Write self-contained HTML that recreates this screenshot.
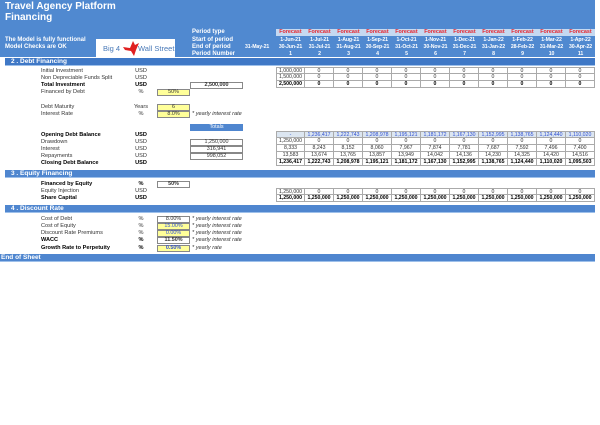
<!DOCTYPE html>
<html><head><meta charset="utf-8"><style>
*{margin:0;padding:0;box-sizing:border-box}
body{width:600px;height:425px;background:#fff;font-family:"Liberation Sans",sans-serif;font-size:5.6px;color:#333;position:relative;overflow:hidden}
.a{position:absolute;white-space:nowrap;line-height:7px}
.hdr{position:absolute;left:0;top:0;width:595px;height:57px;background:#5089d0}
.t{color:#fff;font-weight:bold;font-size:10px;line-height:11px}
.w{color:#fff;font-weight:bold;font-size:6px}
.d{color:#fff;font-weight:bold;font-size:5.2px;letter-spacing:-0.1px}
.d span{width:29px;text-align:center;display:inline-block}
.bar{position:absolute;left:5px;width:590px;height:8px;background:#4f86cf;border-bottom:1px solid #9ec0ea;color:#fff;font-weight:bold;font-size:6.5px;line-height:7px;padding-left:6px}
.row{position:absolute;left:276px;display:flex;height:7px}
.row div{width:29px;text-align:center;line-height:6px;font-size:5.2px;border:1px solid #aaa;border-left:none;border-top:none}
.row div:first-child{border-left:1px solid #aaa}
.top div{border-top:1px solid #aaa}
.b div{font-weight:bold;color:#000}
.blue div{background:#dce6f1;color:#3050d0}
.fc div{border:none!important;color:#e8242c;font-weight:bold;font-size:5.4px;line-height:7px}
.lab{left:41px}.unit{left:132px;width:18px;text-align:center}
.box{position:absolute;height:7px;border:1px solid #888;text-align:center;line-height:5px;font-size:5.4px}
.y{background:#ffff99}
.note{left:192px;font-style:italic}
</style></head><body>
<div class="hdr"></div>
<div class="a t" style="left:5px;top:1px">Travel Agency Platform</div>
<div class="a t" style="left:5px;top:12px">Financing</div>
<div class="a w" style="left:5px;top:37px">The Model is fully functional</div>
<div class="a w" style="left:5px;top:44px">Model Checks are OK</div>
<div style="position:absolute;left:96px;top:39px;width:79px;height:18px;background:#fff"></div>
<div class="a" style="left:103px;top:44px;font-size:7.5px;line-height:9px;color:#4a7ab8">Big 4</div>
<div class="a" style="left:138px;top:44px;font-size:7.5px;line-height:9px;color:#4a7ab8">Wall Street</div>
<svg style="position:absolute;left:121px;top:39px" width="20" height="18"><path d="M2 8 L9 9 L12 2 L14 6 L18 4 L15 11 L13 17 L10 12 L4 11Z" fill="#e02020"/></svg>
<div class="a w" style="left:192px;top:29px">Period type</div>
<div class="a w" style="left:192px;top:37px">Start of period</div>
<div class="a w" style="left:192px;top:44px">End of period</div>
<div class="a w" style="left:192px;top:51px">Period Number</div>
<div class="a d" style="left:245px;top:44px">31-May-21</div>
<div style="position:absolute;left:276px;top:29px;width:319px;height:7px;background:#c5d9f1"></div>
<div class="row fc" style="top:29px"><div>Forecast</div><div>Forecast</div><div>Forecast</div><div>Forecast</div><div>Forecast</div><div>Forecast</div><div>Forecast</div><div>Forecast</div><div>Forecast</div><div>Forecast</div><div>Forecast</div></div>
<div class="a d" style="left:276px;top:37px"><span>1-Jun-21</span><span>1-Jul-21</span><span>1-Aug-21</span><span>1-Sep-21</span><span>1-Oct-21</span><span>1-Nov-21</span><span>1-Dec-21</span><span>1-Jan-22</span><span>1-Feb-22</span><span>1-Mar-22</span><span>1-Apr-22</span></div>
<div class="a d" style="left:276px;top:44px"><span>30-Jun-21</span><span>31-Jul-21</span><span>31-Aug-21</span><span>30-Sep-21</span><span>31-Oct-21</span><span>30-Nov-21</span><span>31-Dec-21</span><span>31-Jan-22</span><span>28-Feb-22</span><span>31-Mar-22</span><span>30-Apr-22</span></div>
<div class="a d" style="left:276px;top:51px"><span>1</span><span>2</span><span>3</span><span>4</span><span>5</span><span>6</span><span>7</span><span>8</span><span>9</span><span>10</span><span>11</span></div>

<div class="bar" style="top:58px;background:#3f78c6">2 . Debt Financing</div>

<div class="a lab" style="top:68px">Initial Investment</div><div class="a unit" style="top:68px">USD</div>
<div class="a lab" style="top:75px">Non Depreciable Funds Split</div><div class="a unit" style="top:75px">USD</div>
<div class="a lab" style="top:82px;font-weight:bold;color:#000">Total Investment</div><div class="a unit" style="top:82px;font-weight:bold;color:#000">USD</div>
<div class="box" style="left:190px;top:82px;width:53px;font-weight:bold">2,500,000</div>
<div class="a lab" style="top:89px">Financed by Debt</div><div class="a unit" style="top:89px">%</div>
<div class="box y" style="left:157px;top:89px;width:33px">50%</div>
<div class="row top" style="top:67px"><div>1,000,000</div><div>0</div><div>0</div><div>0</div><div>0</div><div>0</div><div>0</div><div>0</div><div>0</div><div>0</div><div>0</div></div>
<div class="row" style="top:74px"><div>1,500,000</div><div>0</div><div>0</div><div>0</div><div>0</div><div>0</div><div>0</div><div>0</div><div>0</div><div>0</div><div>0</div></div>
<div class="row b" style="top:81px"><div>2,500,000</div><div>0</div><div>0</div><div>0</div><div>0</div><div>0</div><div>0</div><div>0</div><div>0</div><div>0</div><div>0</div></div>

<div class="a lab" style="top:104px">Debt Maturity</div><div class="a unit" style="top:104px">Years</div>
<div class="box y" style="left:157px;top:104px;width:33px">6</div>
<div class="a lab" style="top:111px">Interest Rate</div><div class="a unit" style="top:111px">%</div>
<div class="box y" style="left:157px;top:111px;width:33px">8.0%</div>
<div class="a note" style="top:111px">* yearly interest rate</div>
<div class="box" style="left:190px;top:124px;width:53px;background:#4f86cf;color:#fff;border-color:#4f86cf">Totals</div>

<div class="a lab" style="top:132px;font-weight:bold;color:#000">Opening Debt Balance</div><div class="a unit" style="top:132px;font-weight:bold;color:#000">USD</div>
<div class="a lab" style="top:139px">Drawdown</div><div class="a unit" style="top:139px">USD</div>
<div class="a lab" style="top:146px">Interest</div><div class="a unit" style="top:146px">USD</div>
<div class="a lab" style="top:153px">Repayments</div><div class="a unit" style="top:153px">USD</div>
<div class="a lab" style="top:160px;font-weight:bold;color:#000">Closing Debt Balance</div><div class="a unit" style="top:160px;font-weight:bold;color:#000">USD</div>
<div class="box" style="left:190px;top:139px;width:53px">1,250,000</div>
<div class="box" style="left:190px;top:146px;width:53px">316,941</div>
<div class="box" style="left:190px;top:153px;width:53px">998,052</div>
<div class="row top blue" style="top:131px"><div>-</div><div>1,236,417</div><div>1,222,743</div><div>1,208,978</div><div>1,195,121</div><div>1,181,172</div><div>1,167,130</div><div>1,152,995</div><div>1,138,765</div><div>1,124,440</div><div>1,110,020</div></div>
<div class="row" style="top:138px"><div>1,250,000</div><div>0</div><div>0</div><div>0</div><div>0</div><div>0</div><div>0</div><div>0</div><div>0</div><div>0</div><div>0</div></div>
<div class="row" style="top:145px"><div>8,333</div><div>8,243</div><div>8,152</div><div>8,060</div><div>7,967</div><div>7,874</div><div>7,781</div><div>7,687</div><div>7,592</div><div>7,496</div><div>7,400</div></div>
<div class="row" style="top:152px"><div>13,583</div><div>13,674</div><div>13,765</div><div>13,857</div><div>13,949</div><div>14,042</div><div>14,136</div><div>14,230</div><div>14,325</div><div>14,420</div><div>14,516</div></div>
<div class="row b" style="top:159px"><div>1,236,417</div><div>1,222,743</div><div>1,208,978</div><div>1,195,121</div><div>1,181,172</div><div>1,167,130</div><div>1,152,995</div><div>1,138,765</div><div>1,124,440</div><div>1,110,020</div><div>1,095,503</div></div>

<div class="bar" style="top:170px">3 . Equity Financing</div>
<div class="a lab" style="top:181px;font-weight:bold;color:#000">Financed by Equity</div><div class="a unit" style="top:181px;font-weight:bold;color:#000">%</div>
<div class="box" style="left:157px;top:181px;width:33px;font-weight:bold">50%</div>
<div class="a lab" style="top:188px">Equity Injection</div><div class="a unit" style="top:188px">USD</div>
<div class="a lab" style="top:195px;font-weight:bold;color:#000">Share Capital</div><div class="a unit" style="top:195px;font-weight:bold;color:#000">USD</div>
<div class="row top" style="top:188px"><div>1,250,000</div><div>0</div><div>0</div><div>0</div><div>0</div><div>0</div><div>0</div><div>0</div><div>0</div><div>0</div><div>0</div></div>
<div class="row b" style="top:195px"><div>1,250,000</div><div>1,250,000</div><div>1,250,000</div><div>1,250,000</div><div>1,250,000</div><div>1,250,000</div><div>1,250,000</div><div>1,250,000</div><div>1,250,000</div><div>1,250,000</div><div>1,250,000</div></div>

<div class="bar" style="top:205px">4 . Discount Rate</div>
<div class="a lab" style="top:216px">Cost of Debt</div><div class="a unit" style="top:216px">%</div>
<div class="box" style="left:157px;top:216px;width:33px">8.00%</div><div class="a note" style="top:216px">* yearly interest rate</div>
<div class="a lab" style="top:223px">Cost of Equity</div><div class="a unit" style="top:223px">%</div>
<div class="box y" style="left:157px;top:223px;width:33px;color:#3050d0">15.00%</div><div class="a note" style="top:223px">* yearly interest rate</div>
<div class="a lab" style="top:230px">Discount Rate Premiums</div><div class="a unit" style="top:230px">%</div>
<div class="box y" style="left:157px;top:230px;width:33px;color:#3050d0">0.00%</div><div class="a note" style="top:230px">* yearly interest rate</div>
<div class="a lab" style="top:237px;font-weight:bold;color:#000">WACC</div><div class="a unit" style="top:237px;font-weight:bold;color:#000">%</div>
<div class="box" style="left:157px;top:237px;width:33px;font-weight:bold">11.50%</div><div class="a note" style="top:237px">* yearly interest rate</div>
<div class="a lab" style="top:245px;font-weight:bold;color:#000">Growth Rate to Perpetuity</div><div class="a unit" style="top:245px;font-weight:bold;color:#000">%</div>
<div class="box y" style="left:157px;top:245px;width:33px;color:#3050d0;font-weight:bold">0.50%</div><div class="a note" style="top:245px">* yearly rate</div>

<div class="bar" style="top:254px;left:0;width:595px;padding-left:1px">End of Sheet</div>
</body></html>
